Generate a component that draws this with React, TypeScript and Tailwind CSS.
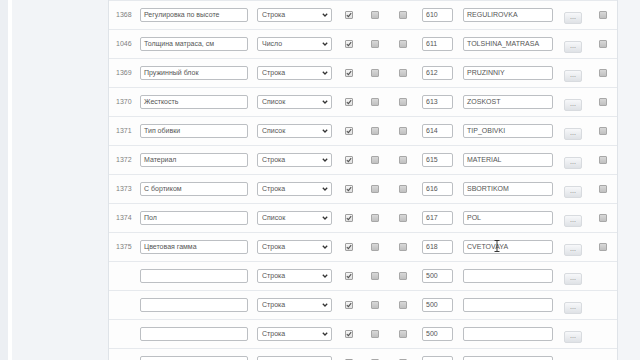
import React from "react";

type Row = { id?: string; name: string; type: string; num: string; code: string };

const rows: Row[] = [
  { id: "1368", name: "Регулировка по высоте", type: "Строка", num: "610", code: "REGULIROVKA" },
  { id: "1046", name: "Толщина матраса, см", type: "Число", num: "611", code: "TOLSHINA_MATRASA" },
  { id: "1369", name: "Пружинный блок", type: "Строка", num: "612", code: "PRUZINNIY" },
  { id: "1370", name: "Жесткость", type: "Список", num: "613", code: "ZOSKOST" },
  { id: "1371", name: "Тип обивки", type: "Список", num: "614", code: "TIP_OBIVKI" },
  { id: "1372", name: "Материал", type: "Строка", num: "615", code: "MATERIAL" },
  { id: "1373", name: "С бортиком", type: "Строка", num: "616", code: "SBORTIKOM" },
  { id: "1374", name: "Пол", type: "Список", num: "617", code: "POL" },
  { id: "1375", name: "Цветовая гамма", type: "Строка", num: "618", code: "CVETOVAYA" },
  { name: "", type: "Строка", num: "500", code: "" },
  { name: "", type: "Строка", num: "500", code: "" },
  { name: "", type: "Строка", num: "500", code: "" },
  { name: "", type: "Строка", num: "500", code: "" },
];

const Check = ({ checked }: { checked?: boolean }) =>
  checked ? (
    <div className="w-[8px] h-[8px] border border-[#a0a0a0] rounded-[1px] bg-gradient-to-b from-[#f6f6f6] to-[#e0e0e0] flex items-center justify-center">
      <svg width="6" height="6" viewBox="0 0 6 6">
        <path d="M0.8 3.1 L2.4 4.6 L5.2 1.2" stroke="#555" strokeWidth="1.1" fill="none" />
      </svg>
    </div>
  ) : (
    <div className="w-[8px] h-[8px] border border-[#a8a8a8] rounded-[1px] bg-gradient-to-b from-[#d8d8d8] to-[#c0c0c0]" />
  );

const Field = ({ w, text }: { w: string; text: string }) => (
  <div className={`${w} h-[14px] border border-[#bcbfc3] rounded-[2px] bg-white flex items-center pl-[3px] text-[7px] text-[#555] whitespace-nowrap overflow-hidden`}>
    {text}
  </div>
);

export default function App() {
  return (
    <div className="w-[640px] h-[360px] overflow-hidden flex bg-[#f3f5f8]" style={{ fontFamily: '"Liberation Sans", Arial, sans-serif' }}>
      {/* left side */}
      <div className="w-[108px] flex shrink-0">
        <div className="w-[8px] bg-[#eceff3]" />
        <div className="w-[4px] bg-white" />
        <div className="flex-1 bg-[#f2f4f7]" />
      </div>

      {/* table */}
      <div className="w-[510px] shrink-0 bg-[#fdfdfd] border-l border-r border-[#dfe3e8] relative">
        <div className="h-[1px] bg-[#e6e9ed]" />
        {rows.map((r, i) => (
          <div key={i} className="h-[29px] border-b border-[#e6e9ed] flex items-center">
            <div className="w-[31px] shrink-0 pl-[7px] text-[7px] text-[#808080]">{r.id}</div>
            <Field w="w-[108px] shrink-0" text={r.name} />
            <div className="w-[75px] shrink-0 ml-[9px] h-[14px] border border-[#bcbfc3] rounded-[2px] bg-white flex items-center justify-between pl-[4px] pr-[3px] text-[7px] text-[#555]">
              <span>{r.type}</span>
              <svg width="6" height="4" viewBox="0 0 6 4">
                <path d="M0.8 0.8 L3 3 L5.2 0.8" stroke="#333" strokeWidth="1.3" fill="none" />
              </svg>
            </div>
            <div className="ml-[13px] shrink-0"><Check checked /></div>
            <div className="ml-[18px] shrink-0"><Check /></div>
            <div className="ml-[20px] shrink-0"><Check /></div>
            <div className="ml-[15px] shrink-0"><Field w="w-[31px]" text={r.num} /></div>
            <div className="ml-[10px] shrink-0"><Field w="w-[90px]" text={r.code} /></div>
            <div className="ml-[11px] mt-[5px] shrink-0 w-[18px] h-[12px] rounded-[2px] border border-[#d8dbdf] bg-gradient-to-b from-[#f7f8fa] to-[#dfe2e6] flex items-center justify-center text-[7px] text-[#777] leading-none pb-[3px]">
              ...
            </div>
            {r.id && <div className="ml-[17px] shrink-0"><Check /></div>}
          </div>
        ))}
        {/* text cursor over last code field */}
        <svg className="absolute left-[385px] top-[240px]" width="6" height="12" viewBox="0 0 6 12">
          <path d="M0.5 0.5 H5.5 M3 0.5 V11.5 M0.5 11.5 H5.5" stroke="#222" strokeWidth="0.9" fill="none" />
        </svg>
      </div>

      <div className="flex-1 bg-[#f3f5f8]" />
    </div>
  );
}
